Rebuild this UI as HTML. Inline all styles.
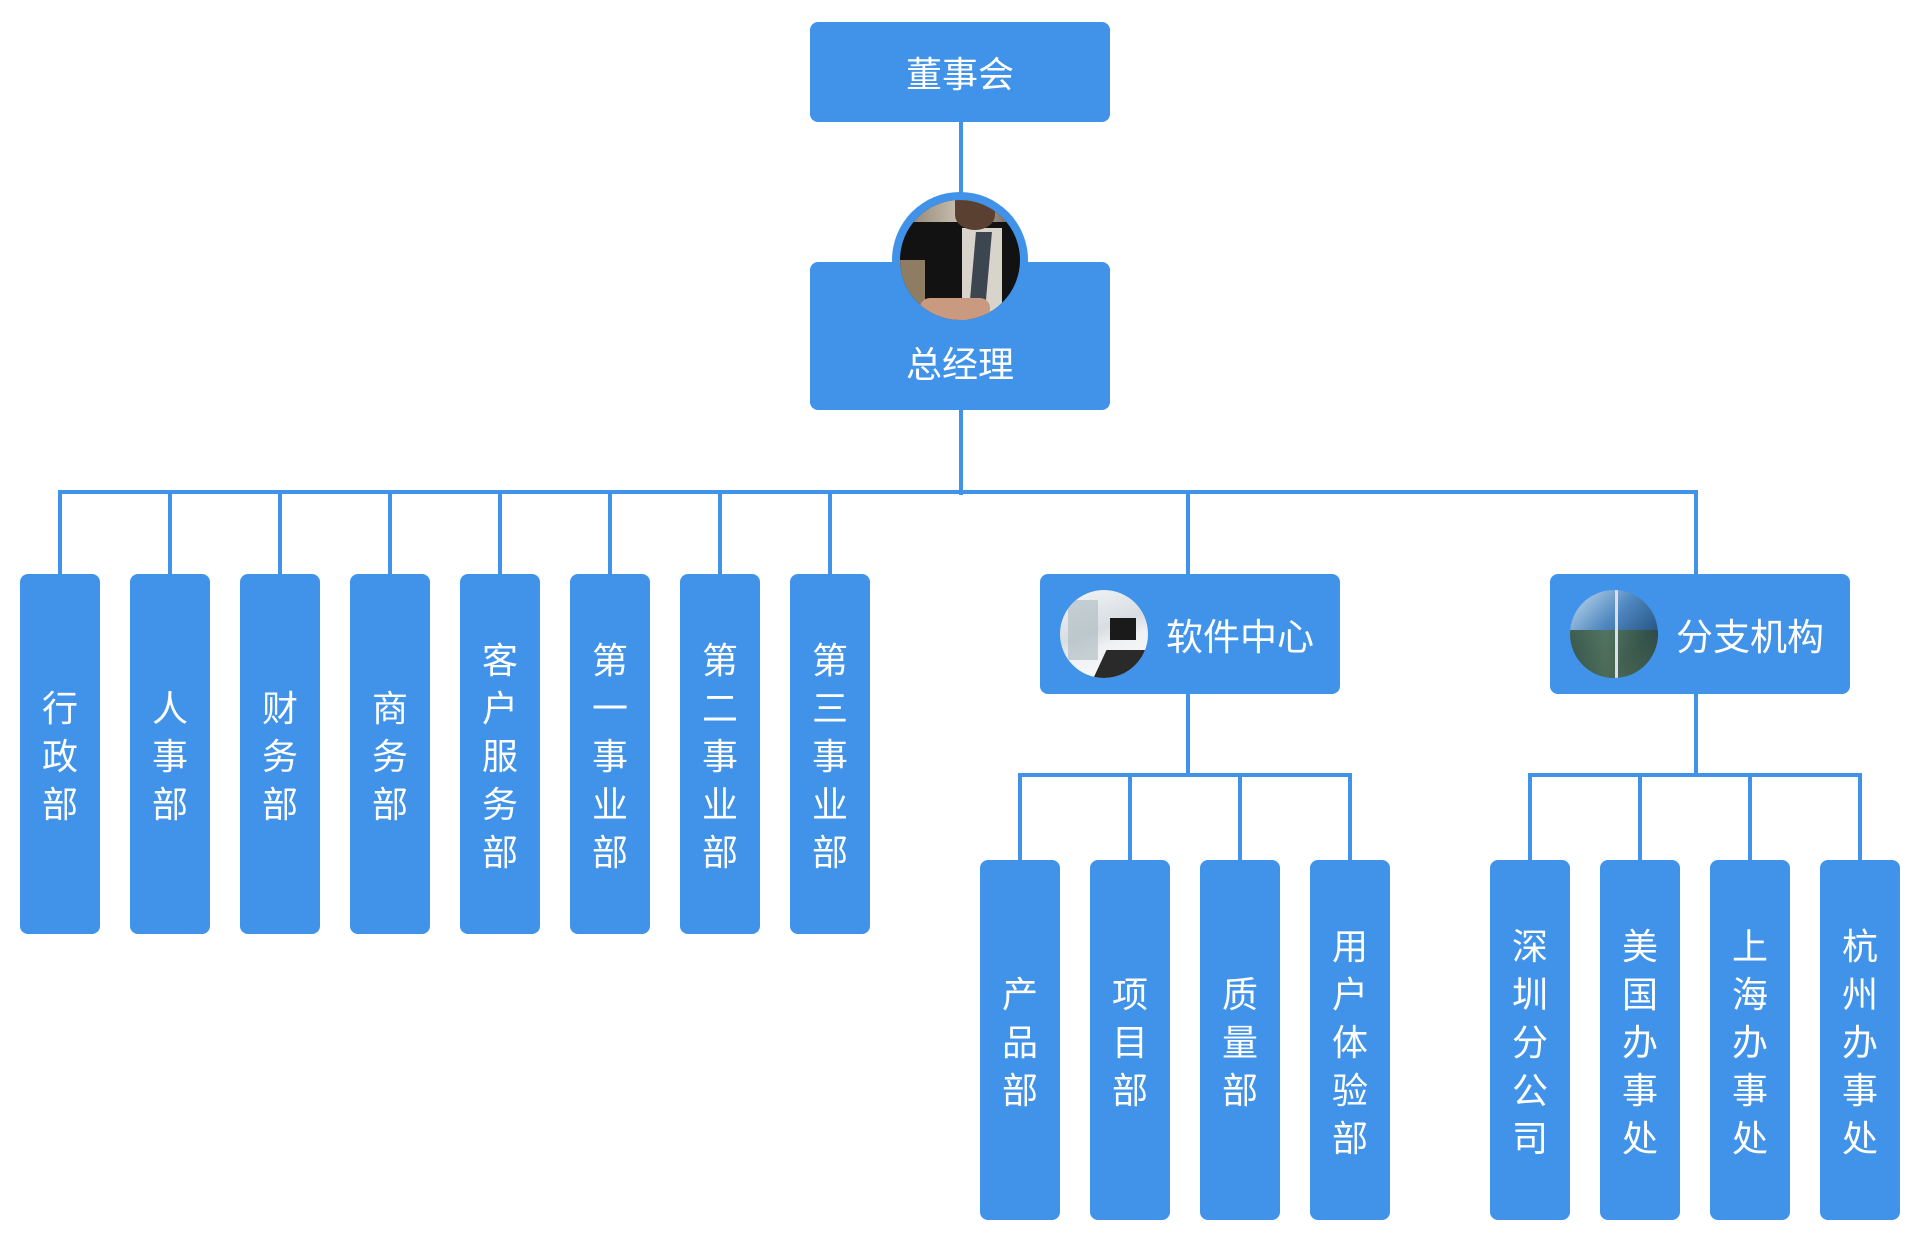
<!DOCTYPE html>
<html><head><meta charset="utf-8"><style>
body{margin:0;width:1920px;height:1240px;background:#fff;position:relative;overflow:hidden;font-family:"Liberation Sans","Noto Sans CJK SC",sans-serif;}
.b{position:absolute;background:#4193e9;border-radius:8px;color:#fff;}
.h{display:flex;align-items:center;justify-content:center;font-size:36px;}
.v{width:80px;height:360px;display:flex;align-items:center;justify-content:center;font-size:36px;line-height:48px;text-align:center;padding-top:6px;box-sizing:border-box;}
.v span{width:40px;display:block;}
.l{position:absolute;background:#4193e9;}
.ic{position:absolute;width:88px;height:88px;border-radius:50%;overflow:hidden;}
</style></head><body>
<div class="l" style="left:959px;top:120px;width:4px;height:80px"></div>
<div class="l" style="left:959px;top:405px;width:4px;height:90px"></div>
<div class="l" style="left:58px;top:490px;width:1640px;height:4px"></div>
<div class="l" style="left:58px;top:490px;width:4px;height:86px"></div>
<div class="l" style="left:168px;top:490px;width:4px;height:86px"></div>
<div class="l" style="left:278px;top:490px;width:4px;height:86px"></div>
<div class="l" style="left:388px;top:490px;width:4px;height:86px"></div>
<div class="l" style="left:498px;top:490px;width:4px;height:86px"></div>
<div class="l" style="left:608px;top:490px;width:4px;height:86px"></div>
<div class="l" style="left:718px;top:490px;width:4px;height:86px"></div>
<div class="l" style="left:828px;top:490px;width:4px;height:86px"></div>
<div class="l" style="left:1186px;top:490px;width:4px;height:86px"></div>
<div class="l" style="left:1694px;top:490px;width:4px;height:86px"></div>
<div class="l" style="left:1186px;top:690px;width:4px;height:85px"></div>
<div class="l" style="left:1694px;top:690px;width:4px;height:85px"></div>
<div class="l" style="left:1018px;top:773px;width:334px;height:4px"></div>
<div class="l" style="left:1528px;top:773px;width:334px;height:4px"></div>
<div class="l" style="left:1018px;top:773px;width:4px;height:90px"></div>
<div class="l" style="left:1128px;top:773px;width:4px;height:90px"></div>
<div class="l" style="left:1238px;top:773px;width:4px;height:90px"></div>
<div class="l" style="left:1348px;top:773px;width:4px;height:90px"></div>
<div class="l" style="left:1528px;top:773px;width:4px;height:90px"></div>
<div class="l" style="left:1638px;top:773px;width:4px;height:90px"></div>
<div class="l" style="left:1748px;top:773px;width:4px;height:90px"></div>
<div class="l" style="left:1858px;top:773px;width:4px;height:90px"></div>

<div class="b h" style="left:810px;top:22px;width:300px;height:100px">董事会</div>
<div class="b h" style="left:810px;top:262px;width:300px;height:148px;align-items:flex-end;padding-bottom:22px;box-sizing:border-box">总经理</div>
<div style="position:absolute;left:892px;top:192px;width:136px;height:136px;border-radius:50%;background:#4193e9"></div>
<div style="position:absolute;left:900px;top:200px;width:120px;height:120px;border-radius:50%;overflow:hidden;background:#121212">
 <div style="position:absolute;left:0;top:0;width:120px;height:22px;background:linear-gradient(90deg,#8a7e6e,#c9c0b0 50%,#6a5d50)"></div>
 <div style="position:absolute;left:0;top:60px;width:25px;height:50px;background:#8f7d63"></div>
 <div style="position:absolute;left:62px;top:28px;width:40px;height:100px;background:#d8d4cc"></div>
 <div style="position:absolute;left:72px;top:32px;width:16px;height:90px;background:#3c4650;transform:skewX(-5deg)"></div>
 <div style="position:absolute;left:55px;top:0;width:40px;height:30px;background:#5a4030;border-radius:0 0 50% 50%"></div>
 <div style="position:absolute;left:20px;top:98px;width:70px;height:22px;background:#c99a80;border-radius:10px"></div>
</div>

<div class="b v" style="left:20px;top:574px"><span>行政部</span></div>
<div class="b v" style="left:130px;top:574px"><span>人事部</span></div>
<div class="b v" style="left:240px;top:574px"><span>财务部</span></div>
<div class="b v" style="left:350px;top:574px"><span>商务部</span></div>
<div class="b v" style="left:460px;top:574px"><span>客户服务部</span></div>
<div class="b v" style="left:570px;top:574px"><span>第一事业部</span></div>
<div class="b v" style="left:680px;top:574px"><span>第二事业部</span></div>
<div class="b v" style="left:790px;top:574px"><span>第三事业部</span></div>

<div class="b" style="left:1040px;top:574px;width:300px;height:120px">
 <div class="ic" style="left:20px;top:16px;background:linear-gradient(160deg,#f4f6f8,#d8dde2 45%,#eef0f2 60%,#ffffff)">
  <div style="position:absolute;left:8px;top:10px;width:30px;height:60px;background:rgba(170,185,190,.6)"></div>
  <div style="position:absolute;left:50px;top:28px;width:26px;height:22px;background:#1a1a1a"></div>
  <div style="position:absolute;left:40px;top:60px;width:48px;height:28px;background:#2a2a2a;transform:skewX(-25deg)"></div>
 </div>
 <div style="position:absolute;left:126px;top:0;height:120px;display:flex;align-items:center;font-size:37px;color:#fff">软件中心</div>
</div>
<div class="b" style="left:1550px;top:574px;width:300px;height:120px">
 <div class="ic" style="left:20px;top:16px;background:linear-gradient(135deg,#c9dff0,#4f87c0 40%,#2b5a8a 70%,#6d8e9e)">
  <div style="position:absolute;left:0;top:40px;width:88px;height:48px;background:linear-gradient(90deg,#2f4a30,#55704a 40%,#2d4836);opacity:.8"></div>
  <div style="position:absolute;left:45px;top:0;width:3px;height:88px;background:#dde"></div>
 </div>
 <div style="position:absolute;left:126px;top:0;height:120px;display:flex;align-items:center;font-size:37px;color:#fff">分支机构</div>
</div>

<div class="b v" style="left:980px;top:860px"><span>产品部</span></div>
<div class="b v" style="left:1090px;top:860px"><span>项目部</span></div>
<div class="b v" style="left:1200px;top:860px"><span>质量部</span></div>
<div class="b v" style="left:1310px;top:860px"><span>用户体验部</span></div>
<div class="b v" style="left:1490px;top:860px"><span>深圳分公司</span></div>
<div class="b v" style="left:1600px;top:860px"><span>美国办事处</span></div>
<div class="b v" style="left:1710px;top:860px"><span>上海办事处</span></div>
<div class="b v" style="left:1820px;top:860px"><span>杭州办事处</span></div>
</body></html>
